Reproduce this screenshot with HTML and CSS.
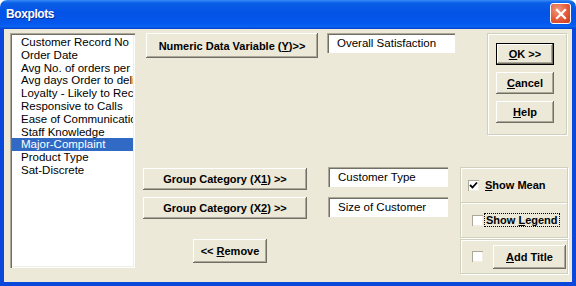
FILE: index.html
```html
<!DOCTYPE html>
<html>

<head>
    <meta charset="UTF-8">
    <meta name="viewport" content="width=device-width, initial-scale=1.0">
    <title>Boxplots</title>
    <link rel="stylesheet" href="styles.css">
</head>

<body>
    <div class="window">
        <header class="titlebar">
            <span class="title">Boxplots</span>
            <span class="close">
                <svg width="12" height="12" viewBox="0 0 12 12">
                    <path d="M2 2 L10 10 M10 2 L2 10" stroke="#fff" stroke-width="2.2" stroke-linecap="square" />
                </svg>
            </span>
        </header>
        <div class="content">
            <div class="listbox">
                <div class="item">Customer Record No</div>
                <div class="item">Order Date</div>
                <div class="item">Avg No. of orders per month</div>
                <div class="item">Avg days Order to delivery</div>
                <div class="item">Loyalty - Likely to Recommend</div>
                <div class="item">Responsive to Calls</div>
                <div class="item">Ease of Communication</div>
                <div class="item">Staff Knowledge</div>
                <div class="item selected">Major-Complaint</div>
                <div class="item">Product Type</div>
                <div class="item">Sat-Discrete</div>
            </div>

            <div class="middle">
                <div class="row row-y">
                    <button class="btn btn-y">Numeric Data Variable (<u>Y</u>)&gt;&gt;</button>
                    <div class="field field-y">Overall Satisfaction</div>
                </div>
                <div class="row row-x1">
                    <button class="btn btn-x">Group Category (X<u>1</u>) &gt;&gt;</button>
                    <div class="field field-x">Customer Type</div>
                </div>
                <div class="row row-x2">
                    <button class="btn btn-x">Group Category (X<u>2</u>) &gt;&gt;</button>
                    <div class="field field-x">Size of Customer</div>
                </div>
                <button class="btn btn-remove">&lt;&lt; <u>R</u>emove</button>
            </div>

            <div class="side">
                <div class="frame frame-actions">
                    <button class="btn btn-action btn-default"><u>O</u>K &gt;&gt;</button>
                    <button class="btn btn-action"><u>C</u>ancel</button>
                    <button class="btn btn-action"><u>H</u>elp</button>
                </div>
                <div class="frame frame-mean">
                    <span class="check">
                        <svg width="9" height="9" viewBox="0 0 9 9">
                            <path d="M1 4 L3.5 6.5 L8 1.5" stroke="#000" stroke-width="1.8" fill="none" />
                        </svg>
                    </span>
                    <span class="label"><u>S</u>how Mean</span>
                </div>
                <div class="frame frame-legend">
                    <span class="check"></span>
                    <span class="label focus">Show <u>L</u>egend</span>
                </div>
                <div class="frame frame-title">
                    <span class="check"></span>
                    <button class="btn btn-title"><u>A</u>dd Title</button>
                </div>
            </div>
        </div>
    </div>
</body>

</html>
```

FILE: styles.css
```css
body {
    margin: 0;
    font-family: "Liberation Sans", Arial, sans-serif;
    font-size: 11px;
    color: #000;
}

.window {
    width: 576px;
    height: 286px;
    display: flex;
    flex-direction: column;
    overflow: hidden;
}

/* title bar */
.titlebar {
    height: 29px;
    flex: none;
    display: flex;
    align-items: center;
    justify-content: space-between;
    padding: 0 5px 0 6px;
    box-sizing: border-box;
    background: linear-gradient(#3a8cf6 0%, #0a5fe6 10%, #0452e6 45%, #0458ee 80%, #0a62f2 92%, #0340c8 100%);
    border-radius: 7px 7px 0 0;
}

.title {
    color: #fff;
    font-weight: bold;
    font-size: 12px;
    letter-spacing: -0.4px;
    text-shadow: 1px 1px #0a2f9a;
    margin-top: -1px;
}

.close {
    width: 19px;
    height: 19px;
    margin-top: -2px;
    display: flex;
    align-items: center;
    justify-content: center;
    border: 1px solid #fff;
    border-radius: 3px;
    background: radial-gradient(circle at 35% 30%, #f29a7c 0%, #e2593a 55%, #c83a1c 100%);
}

/* dialog body */
.content {
    flex: 1;
    display: flex;
    align-items: flex-start;
    background: #ece9d8;
    border: 4px solid #0a48dc;
    border-top: none;
}

.listbox {
    width: 125px;
    height: 235px;
    margin: 4px 0 0 6px;
    padding-top: 3px;
    box-sizing: border-box;
    background: #fff;
    box-shadow: inset 1px 1px #aca899, inset 2px 2px #716f64, inset -1px -1px #fff, inset -2px -2px #f1efe2;
    overflow: hidden;
    white-space: nowrap;
}

.item {
    height: 12.8px;
    line-height: 12.8px;
    font-size: 11.5px;
    padding-left: 9px;
    margin: 0 2px;
    overflow: hidden;
}

.item.selected {
    background: #316ac5;
    color: #fff;
}

.middle {
    width: 312px;
    margin-left: 8px;
    padding-top: 4px;
}

.row {
    display: flex;
    align-items: flex-start;
}

.btn {
    font-family: "Liberation Sans", Arial, sans-serif;
    font-size: 11px;
    font-weight: bold;
    color: #000;
    background: #ece9d8;
    border: none;
    padding: 0;
    box-shadow: inset -1px -1px #716f64, inset 1px 1px #fff, inset -2px -2px #aca899;
}

.btn-y {
    width: 172px;
    height: 25px;
    margin-left: 3px;
}

.field {
    height: 20px;
    line-height: 20px;
    padding-left: 10px;
    box-sizing: border-box;
    font-size: 11.5px;
    background: #fff;
    box-shadow: inset 1px 1px #aca899, inset 2px 2px #716f64, inset -1px -1px #fff;
    white-space: nowrap;
}

.field-y {
    width: 128px;
    margin-left: 9px;
}

.row-x1 {
    margin-top: 109px;
}

.row-x2 {
    margin-top: 7px;
}

.btn-x {
    width: 164px;
    height: 22px;
}

.row-x1 .btn-x {
    margin-top: 1px;
}

.field-x {
    width: 120px;
    margin-left: 21px;
}

.btn-remove {
    display: block;
    width: 74px;
    height: 24px;
    margin: 20px 0 0 50px;
}

/* right column */
.side {
    width: 108px;
    margin-left: 5px;
    padding-top: 4px;
}

.frame {
    box-sizing: border-box;
    border: 1px solid #d0d0bf;
    box-shadow: inset 1px 1px #fff, 1px 1px #fff;
}

.frame-actions {
    width: 80px;
    height: 102px;
    margin-left: 27px;
    padding: 9px 0 0 8px;
    display: flex;
    flex-direction: column;
    gap: 7px;
}

.btn-action {
    width: 58px;
    height: 22px;
}

.btn-default {
    box-shadow: inset 0 0 0 1px #000, inset -2px -2px #716f64, inset 2px 2px #fff, inset -3px -3px #aca899;
}

.frame-mean,
.frame-legend,
.frame-title {
    display: flex;
    align-items: center;
    height: 36px;
}

.frame-mean {
    margin-top: 32px;
    padding-left: 7px;
}

.frame-legend {
    height: 36px;
    margin-top: -1px;
    padding-left: 11px;
}

.frame-title {
    height: 35px;
    margin-top: 1px;
    padding-left: 11px;
}

.check {
    width: 11px;
    height: 11px;
    flex: none;
    display: flex;
    align-items: center;
    justify-content: center;
    background: #fff;
    box-shadow: inset 1px 1px #aca899, inset -1px -1px #f1efe2;
}

.label {
    font-weight: bold;
    margin-left: 6px;
    white-space: nowrap;
}

.frame-legend .label {
    margin-left: 2px;
}

.focus {
    outline: 1px dotted #000;
    padding: 0 1px 0 1px;
}

.btn-title {
    width: 73px;
    height: 24px;
    margin-left: 10px;
}
```
